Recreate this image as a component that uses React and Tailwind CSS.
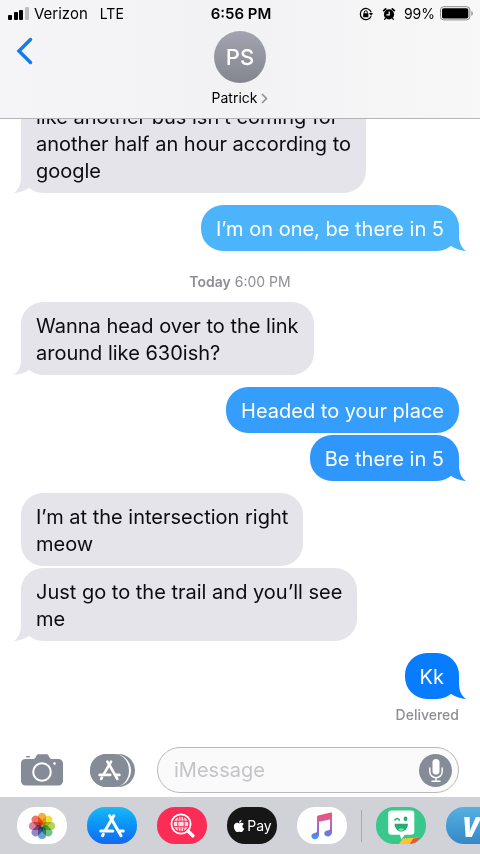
import React from "react";
import { FaApple } from "react-icons/fa6";

const conversation = [
  {
    from: "them",
    tail: true,
    text: "like another bus isn’t coming for\nanother half an hour according to\ngoogle",
  },
  { from: "me", tail: true, text: "I’m on one, be there in 5", color: "bg-[#4bb4fb] text-[#4bb4fb]" },
  { stamp: true },
  { from: "them", tail: true, text: "Wanna head over to the link\naround like 630ish?" },
  { from: "me", text: "Headed to your place", color: "bg-[#359dfb] text-[#359dfb]" },
  { from: "me", tail: true, grouped: true, text: "Be there in 5", color: "bg-[#2f97fb] text-[#2f97fb]" },
  { from: "them", text: "I’m at the intersection right\nmeow" },
  { from: "them", tail: true, grouped: true, text: "Just go to the trail and you’ll see\nme" },
  { from: "me", tail: true, text: "Kk", color: "bg-[#087cfe] text-[#087cfe]" },
];

function Tail({ mine }) {
  return (
    <svg
      viewBox="0 0 26 23"
      aria-hidden="true"
      className={
        "absolute bottom-0 h-[23px] w-[26px] " + (mine ? "-right-[7px]" : "-left-[7px] -scale-x-100")
      }
    >
      <path d="M8 0H19V7C19 14 21 19.500 26 23C21 22.500 16 21 12 18.500L8 16Z" fill="currentColor" />
    </svg>
  );
}

function Bubble({ message }) {
  const mine = message.from === "me";
  const place = mine ? "self-end " : "self-start ";
  const tint = mine ? message.color : "bg-[#e5e4ea] text-[#e5e4ea]";
  const gap = message.grouped ? " mt-[2px]" : " mt-3";
  return (
    <div className={"relative rounded-[22px] px-[15px] pt-[11px] pb-2 " + place + tint + gap}>
      {message.tail && <Tail mine={mine} />}
      <p
        className={
          "relative whitespace-pre-line text-[20px] leading-[27px] " + (mine ? "text-white" : "text-[#0c0c10]")
        }
      >
        {message.text}
      </p>
    </div>
  );
}

function StatusBar() {
  return (
    <div className="grid h-[27px] grid-cols-[1fr_auto_1fr] items-center pl-2 pr-[6px] text-[14px] leading-5 text-black">
      <div className="flex items-center">
        <svg viewBox="0 0 21 13" className="h-[13px] w-[21px]" aria-hidden="true">
          <rect x="0" y="8" width="4" height="5" rx="1" />
          <rect x="6" y="5" width="4" height="8" rx="1" />
          <rect x="11" y="3" width="4" height="10" rx="1" />
          <rect x="17" y="0" width="4" height="13" rx="1" fill="#bdbdc1" />
        </svg>
        <span className="ml-[5px] text-[15px]">Verizon</span>
        <span className="ml-3">LTE</span>
      </div>
      <span className="text-[15px] font-semibold">6:56 PM</span>
      <div className="flex items-center justify-end">
        <svg viewBox="0 0 14 14" className="mr-[9px] h-[14px] w-[14px]" aria-hidden="true">
          <path d="M12.1 9.2A5.6 5.6 0 1 1 12.2 5.2" fill="none" stroke="#000" strokeWidth="1.2" />
          <path d="M9.9 6H14L12.1 8.8Z" />
          <rect x="4.2" y="6.3" width="5.2" height="3.9" rx=".5" />
          <path d="M5.3 6.5V5.2a1.5 1.5 0 0 1 3 0v1.3" fill="none" stroke="#000" strokeWidth="1" />
        </svg>
        <svg viewBox="0 0 14 14" className="mr-2 h-[14px] w-[14px]" aria-hidden="true">
          <circle cx="7" cy="7.4" r="5.1" />
          <path d="M1.700 3.600 3.700 1.900M12.300 3.600 10.300 1.900" stroke="#000" strokeWidth="1.800" strokeLinecap="round" />
          <path d="m3.400 11.400-.7 1m7.900-1 .7 1" stroke="#000" strokeWidth="1.200" strokeLinecap="round" />
          <path d="M7.2 4.4v3.5H4.400" stroke="#fff" strokeWidth="1.2" fill="none" />
        </svg>
        <span>99%</span>
        <svg viewBox="0 0 34 15" className="ml-[5px] h-[15px] w-[34px]" aria-hidden="true">
          <rect x=".5" y=".7" width="29.3" height="13.2" rx="3.2" fill="none" stroke="#8b8b8e" />
          <rect x="2" y="2.2" width="26.3" height="10.2" rx="1.6" />
          <path d="M31.3 5c2 .8 2 4 0 4.800Z" fill="#8b8b8e" />
        </svg>
      </div>
    </div>
  );
}

function Header() {
  return (
    <header className="relative z-10 flex h-[119px] shrink-0 flex-col border-b border-[#b4b4b8] bg-[#f7f7f8] bg-linear-to-r from-[#f5f5f7] via-[#f2f2f5] to-[#f8f8f8]">
      <StatusBar />
      <div className="grid grid-cols-[1fr_auto_1fr] items-start px-4">
        <button aria-label="Back" className="mt-[10px] justify-self-start">
          <svg viewBox="0 0 17 28" className="h-[28px] w-[17px]" aria-hidden="true">
            <path d="M14.500 2.500 3 14l11.500 11.500" fill="none" stroke="#157aea" strokeWidth="3.500" strokeLinecap="round" />
          </svg>
        </button>
        <button className="flex flex-col items-center">
          <span className="mt-1 flex size-[52px] items-center justify-center rounded-full bg-linear-to-b from-[#a2a5b1] to-[#84868f] text-[22px] font-medium text-white">
            PS
          </span>
          <span className="mt-[5px] flex items-center gap-1 text-[14px] leading-5 text-black">
            Patrick
            <svg viewBox="0 0 7 11" className="h-[11px] w-[7px]" aria-hidden="true">
              <path d="m1 1 4.500 4.500L1 10" fill="none" stroke="#8c8c91" strokeWidth="1.500" />
            </svg>
          </span>
        </button>
      </div>
    </header>
  );
}

function StoreGlyph({ className }) {
  return (
    <svg viewBox="0 0 26 24" className={className} aria-hidden="true">
      <g fill="none" stroke="#fff" strokeWidth="3" strokeLinecap="round">
        <path d="M14.800 1.800 6.600 15.800M4.300 20.200 3.500 21.700" />
        <path d="M10.600 1.800 22 21.700" />
        <path d="M1.700 17H13.800M20 17h4.300" />
      </g>
    </svg>
  );
}

function ComposeBar() {
  return (
    <form className="flex shrink-0 items-center px-[21px] pb-1" onSubmit={(e) => e.preventDefault()}>
      <button type="button" aria-label="Camera">
        <svg viewBox="0 0 42 32" className="h-8 w-[42px]" aria-hidden="true">
          <path
            d="M4 5h8c1.500 0 2-.6 2.700-1.800l.7-1.400C16 .7 16.700.3 18 .3h7c1.300 0 2 .4 2.600 1.500l.8 1.400C29 4.400 29.600 5 31 5h6.500A4.500 4.500 0 0 1 42 9.500V27a4.500 4.500 0 0 1-4.500 4.500h-33A4.500 4.500 0 0 1 0 27V9.500A4.500 4.500 0 0 1 4 5Z"
            fill="#868b98"
          />
          <rect x="5" y="2" width="4" height="1.500" rx=".7" fill="#868b98" />
          <circle cx="21" cy="18" r="8.800" fill="none" stroke="#fff" strokeWidth="2" />
          <circle cx="33.500" cy="9.500" r="1.300" fill="#fff" />
        </svg>
      </button>
      <button type="button" aria-label="Apps" className="relative ml-[27px] h-[33px] w-[45px] rounded-full bg-[#868b98]">
        <span className="absolute top-0 left-0 flex h-[33px] w-[41px] items-center justify-center rounded-full border-r-2 border-white bg-[#868b98]">
          <StoreGlyph className="h-[21px] w-[23px]" />
        </span>
      </button>
      <div className="ml-[22px] flex h-[46px] min-w-0 flex-1 items-center rounded-full border border-[#b9b9bd] bg-[#fafafa] pr-[6px] pl-4">
        <input
          aria-label="iMessage"
          placeholder="iMessage"
          className="min-w-0 flex-1 bg-transparent text-[20px] leading-7 text-black outline-none placeholder:text-[#c4c4c8]"
        />
        <button type="button" aria-label="Dictate" className="flex size-[33px] items-center justify-center rounded-full bg-[#868b98]">
          <svg viewBox="0 0 16 25" className="h-[25px] w-4" aria-hidden="true">
            <rect x="4.500" y="1" width="7" height="15.500" rx="3.500" fill="#fff" />
            <path d="M1.800 10v3.500a6.200 6.200 0 0 0 12.400 0V10M8 19.700V23M4 23.300h8" fill="none" stroke="#fff" strokeWidth="1.500" strokeLinecap="round" />
          </svg>
        </button>
      </div>
    </form>
  );
}

const petals = [
  [0, "#f59a1c"],
  [45, "#e6d822"],
  [90, "#a4c93c"],
  [135, "#55b672"],
  [180, "#4f8fc9"],
  [225, "#8173b8"],
  [270, "#d3688f"],
  [315, "#ec5a48"],
];

function PhotosIcon() {
  return (
    <svg viewBox="0 0 28 28" className="size-[28px]" aria-hidden="true">
      {petals.map(([angle, fill]) => (
        <rect
          key={angle}
          x="10"
          y="1"
          width="8"
          height="12.500"
          rx="4"
          fill={fill}
          fillOpacity=".85"
          className="mix-blend-multiply"
          transform={`rotate(${angle} 14 14)`}
        />
      ))}
    </svg>
  );
}

function ImagesIcon() {
  return (
    <svg viewBox="0 0 25 25" className="size-[25px]" fill="none" stroke="#fff" aria-hidden="true">
      <circle cx="11" cy="11" r="9.600" strokeWidth="1.800" />
      <circle cx="11" cy="11" r="7.300" fill="#ffd9df" stroke="none" />
      <g stroke="#fb2c55" strokeWidth="1">
        <path d="M3 8.300h16M3 13.700h16M11 3v5M11 14v5" />
        <path d="M9 3C7.300 8 7.300 14 9 19M13 3c1.700 5 1.700 11 0 16" />
      </g>
      <path d="m18.200 18.200 4.600 4.600" strokeWidth="3.500" strokeLinecap="round" />
    </svg>
  );
}

function MusicIcon() {
  return (
    <svg viewBox="0 0 24 28" className="h-[28px] w-6" aria-hidden="true">
      <defs>
        <linearGradient id="note" x1="0" y1="0" x2="0" y2="1">
          <stop offset="0" stopColor="#f6506d" />
          <stop offset=".4" stopColor="#c265b6" />
          <stop offset=".75" stopColor="#7570dc" />
          <stop offset="1" stopColor="#3f9ff0" />
        </linearGradient>
      </defs>
      <path
        d="M22 1.200V19.500C22 23 20 24.500 17.700 24.500C15.700 24.500 14.300 23.200 14.300 21.600C14.300 19.800 15.600 18.700 17.500 18.400C19.300 18.100 20 17.800 20 16.400V7.400L9 9.800V22.500C9 25.800 7 27.200 4.800 27.200C2.800 27.200 1.400 26 1.400 24.300C1.400 22.600 2.700 21.400 4.600 21.100C6.300 20.800 7 20.500 7 19.100V5Q7 3.700 8.200 3.400L20.800.6Q22 .3 22 1.200Z"
        fill="url(#note)"
      />
    </svg>
  );
}

function BitmojiIcon() {
  return (
    <svg viewBox="0 0 50 37" className="h-[37px] w-[50px]" aria-hidden="true">
      <path d="M23 37 27 31.500 42 30.500 38 37Z" fill="#fbc52f" />
      <path d="M34 37 37 31.500 44 30.500 39 37Z" fill="#dc5c3c" />
      <path d="M15.500 3.500H35a3.300 3.300 0 0 1 3.300 3.300V24.500a3.300 3.300 0 0 1-3.300 3.300H28.800L25.200 32.500 24 27.800H15.500a3.300 3.300 0 0 1-3.300-3.300V6.800a3.300 3.300 0 0 1 3.300-3.300Z" fill="#fff" />
      <path d="M18.500 16.700H32C31.600 21.500 29 24.500 25.200 24.500S18.900 21.500 18.500 16.700Z" fill="#29ab74" />
      <path d="M22 22.500q3-2.500 6.300 0-3 3.200-6.300 0Z" fill="#78dcae" />
      <path d="M19 13q2.200-3 4.400 0" fill="none" stroke="#29ab74" strokeWidth="1.600" strokeLinecap="round" />
      <ellipse cx="29.500" cy="11.800" rx="1.900" ry="2.400" fill="#29ab74" />
    </svg>
  );
}

function AppPill({ label, className, children }) {
  return (
    <button
      aria-label={label}
      className={"flex h-[37px] w-[50px] shrink-0 items-center justify-center overflow-hidden rounded-[18px] " + className}
    >
      {children}
    </button>
  );
}

function AppTray() {
  return (
    <nav aria-label="Message apps" className="flex h-[57px] shrink-0 items-center gap-5 overflow-hidden bg-[#d1d2d8] pl-[17px]">
      <AppPill label="Photos" className="bg-white">
        <PhotosIcon />
      </AppPill>
      <AppPill label="App Store" className="bg-linear-to-b from-[#1cb8f8] to-[#1468f0]">
        <StoreGlyph className="h-6 w-[26px]" />
      </AppPill>
      <AppPill label="Images" className="bg-[#fb2c55]">
        <ImagesIcon />
      </AppPill>
      <AppPill label="Apple Pay" className="bg-[#161616] text-white">
        <FaApple className="size-[14px]" />
        <span className="ml-px text-[14px] leading-5">Pay</span>
      </AppPill>
      <AppPill label="Music" className="bg-white">
        <MusicIcon />
      </AppPill>
      <div className="-mx-[6px] h-8 w-px shrink-0 bg-[#a9aab1]" />
      <AppPill label="Bitmoji" className="bg-[#39c78b]">
        <BitmojiIcon />
      </AppPill>
      <AppPill label="Venmo" className="bg-linear-to-b from-[#58afe2] to-[#3289c8] text-white">
        <span className="font-['Open_Sans',sans-serif] text-[28px] leading-none font-extrabold italic">V</span>
      </AppPill>
    </nav>
  );
}

export default function App() {
  return (
    <div className="flex h-screen flex-col overflow-hidden bg-white font-['Inter',sans-serif]">
      <Header />
      <main className="flex min-h-0 flex-1 flex-col justify-end overflow-hidden px-[21px] pb-[22px]">
        {conversation.map((message, i) =>
          message.stamp ? (
            <p key={i} className="mt-[23px] text-center text-[14px] leading-4 text-[#8e8e93]">
              <span className="font-semibold">Today</span> 6:00 PM
            </p>
          ) : (
            <Bubble key={i} message={message} />
          )
        )}
        <p className="mt-[6px] self-end text-[14px] leading-5 font-medium text-[#8e8e93]">Delivered</p>
      </main>
      <ComposeBar />
      <AppTray />
    </div>
  );
}
